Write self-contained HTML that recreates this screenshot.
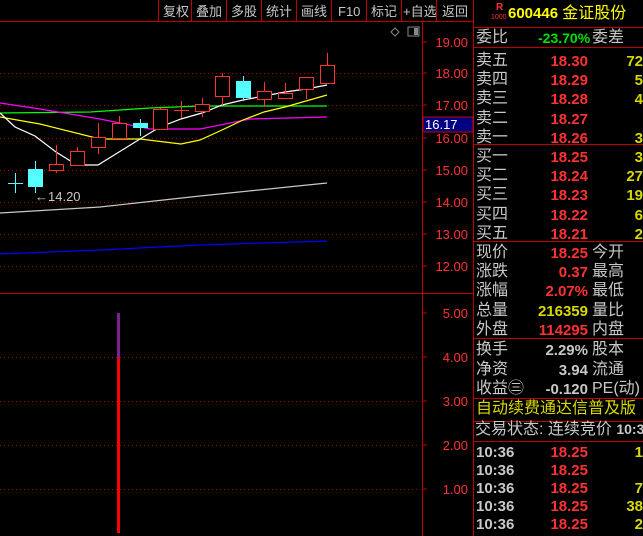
<!DOCTYPE html><html style="overflow:hidden;height:536px"><head><meta charset="utf-8"><style>
body{margin:0;width:643px;height:536px;background:#000;overflow:hidden;position:relative;font-family:"Liberation Sans","Noto Sans CJK SC",sans-serif}
.t{position:absolute;white-space:nowrap;line-height:1}
.l{color:#c8c8c8;font-size:16px}
.p{color:#ff3232;font-size:15px;font-weight:bold;text-align:right;width:70px}
.y{color:#d8d800;font-size:15px;font-weight:bold}
.w{color:#c8c8c8;font-size:15px;font-weight:bold}
.hl{position:absolute;left:474px;width:169px;height:1px;background:#c00000}
</style></head><body>
<svg width="643" height="536" style="position:absolute;left:0;top:0" font-family="Liberation Sans,Noto Sans CJK SC,sans-serif">
<g stroke="#c00000" stroke-width="1">
<line x1="0" y1="21.5" x2="473" y2="21.5"/>
<line x1="0" y1="293.5" x2="473" y2="293.5"/>
<line x1="422.5" y1="21" x2="422.5" y2="536"/>
<line x1="473.5" y1="0" x2="473.5" y2="536"/>
<line x1="158.5" y1="0" x2="158.5" y2="21"/><line x1="191.5" y1="0" x2="191.5" y2="21"/><line x1="226.5" y1="0" x2="226.5" y2="21"/><line x1="261.5" y1="0" x2="261.5" y2="21"/><line x1="296.5" y1="0" x2="296.5" y2="21"/><line x1="331.5" y1="0" x2="331.5" y2="21"/><line x1="366.5" y1="0" x2="366.5" y2="21"/><line x1="401.5" y1="0" x2="401.5" y2="21"/><line x1="436.5" y1="0" x2="436.5" y2="21"/>
</g>
<g stroke="#a00000" stroke-dasharray="1,3">
<line x1="0" y1="73.5" x2="420" y2="73.5"/><line x1="0" y1="105.5" x2="420" y2="105.5"/><line x1="0" y1="138.5" x2="420" y2="138.5"/><line x1="0" y1="170.5" x2="420" y2="170.5"/><line x1="0" y1="202.5" x2="420" y2="202.5"/><line x1="0" y1="234.5" x2="420" y2="234.5"/><line x1="0" y1="266.5" x2="420" y2="266.5"/>
<line x1="0" y1="357.5" x2="420" y2="357.5"/><line x1="0" y1="401.5" x2="420" y2="401.5"/><line x1="0" y1="445.5" x2="420" y2="445.5"/><line x1="0" y1="489.5" x2="420" y2="489.5"/>
</g>
<g stroke="#c00000"><line x1="422" y1="42" x2="427" y2="42"/><line x1="422" y1="73" x2="427" y2="73"/><line x1="422" y1="105" x2="427" y2="105"/><line x1="422" y1="138" x2="427" y2="138"/><line x1="422" y1="170" x2="427" y2="170"/><line x1="422" y1="202" x2="427" y2="202"/><line x1="422" y1="234" x2="427" y2="234"/><line x1="422" y1="266" x2="427" y2="266"/>
<line x1="422" y1="313" x2="427" y2="313"/><line x1="422" y1="357" x2="427" y2="357"/><line x1="422" y1="401" x2="427" y2="401"/><line x1="422" y1="445" x2="427" y2="445"/><line x1="422" y1="489" x2="427" y2="489"/></g>
<g fill="#ff3232" font-size="13" text-anchor="end">
<text x="468" y="47">19.00</text><text x="468" y="78">18.00</text><text x="468" y="110">17.00</text><text x="468" y="143">16.00</text><text x="468" y="175">15.00</text><text x="468" y="207">14.00</text><text x="468" y="239">13.00</text><text x="468" y="271">12.00</text>
<text x="468" y="318">5.00</text><text x="468" y="362">4.00</text><text x="468" y="406">3.00</text><text x="468" y="450">2.00</text><text x="468" y="494">1.00</text>
</g>
<rect x="423" y="117" width="50" height="15" fill="#000080" stroke="#c00000"/>
<text x="425" y="129" fill="#fff" font-size="13">16.17</text>
<g fill="#c8c8c8" font-size="13"><text x="163" y="16">复权</text><text x="196" y="16">叠加</text><text x="231" y="16">多股</text><text x="266" y="16">统计</text><text x="301" y="16">画线</text><text x="338" y="16">F10</text><text x="371" y="16">标记</text><text x="403" y="16">+自选</text><text x="442" y="16">返回</text></g>
<path d="M395 28l4 4-4 4-4-4z" fill="none" stroke="#888"/><rect x="408" y="27" width="11" height="9" fill="none" stroke="#888"/><rect x="414" y="28" width="4" height="7" fill="#888"/>
<g fill="none" stroke-width="1.2">
<polyline stroke="#c8c8c8" points="0,213 100,207 200,196 327,183"/>
<polyline stroke="#0000ff" points="0,254 100,250 200,245 327,241"/>
<polyline stroke="#00ff00" points="0,113 90,112 150,108 200,106 250,106 327,106"/>
<polyline stroke="#ff00ff" points="0,103 40,109 100,119 150,129 200,129 250,119 327,117"/>
<polyline stroke="#ffff00" points="0,117 40,124 100,139 140,139 181,144 200,140 222,130 243,120 264,112 285,107 306,101 327,95"/>
<polyline stroke="#ffffff" points="0,113 15,127 35,136 56,152 77,165 98,165 119,152 140,139 160,127 181,119 202,113 222,105 243,100 264,96 285,92 306,89 327,85"/>
</g>
<g stroke="#ff3232" fill="#000">
<line x1="56.5" y1="145" x2="56.5" y2="173"/><rect x="49.5" y="164.5" width="14" height="6"/>
<line x1="77.5" y1="147" x2="77.5" y2="165"/><rect x="70.5" y="151.5" width="14" height="14"/>
<line x1="98.5" y1="123" x2="98.5" y2="154"/><rect x="91.5" y="137.5" width="14" height="10"/>
<line x1="119.5" y1="116" x2="119.5" y2="139"/><rect x="112.5" y="123.5" width="14" height="15"/>
<line x1="160.5" y1="108" x2="160.5" y2="130"/><rect x="153.5" y="109.5" width="14" height="20"/>
<line x1="181.5" y1="101" x2="181.5" y2="118"/><line x1="174" y1="110.5" x2="189" y2="110.5"/>
<line x1="202.5" y1="98" x2="202.5" y2="117"/><rect x="195.5" y="104.5" width="14" height="7"/>
<line x1="222.5" y1="73" x2="222.5" y2="105"/><rect x="215.5" y="76.5" width="14" height="20"/>
<line x1="264.5" y1="82" x2="264.5" y2="107"/><rect x="257.5" y="91.5" width="14" height="8"/>
<line x1="285.5" y1="83" x2="285.5" y2="98"/><rect x="278.5" y="93.5" width="14" height="5"/>
<line x1="306.5" y1="77" x2="306.5" y2="99"/><rect x="299.5" y="77.5" width="14" height="12"/>
<line x1="327.5" y1="53" x2="327.5" y2="83"/><rect x="320.5" y="65.5" width="14" height="18"/>
</g>
<g stroke="#54ffff" fill="#54ffff">
<line x1="15.5" y1="173" x2="15.5" y2="193"/><line x1="8" y1="183.5" x2="23" y2="183.5"/>
<line x1="35.5" y1="161" x2="35.5" y2="193"/><rect x="28.5" y="169.5" width="14" height="17"/>
<line x1="140.5" y1="119" x2="140.5" y2="136"/><rect x="133.5" y="123.5" width="14" height="4"/>
<line x1="243.5" y1="76" x2="243.5" y2="101"/><rect x="236.5" y="81.5" width="14" height="16"/>
</g>
<text x="35" y="201" fill="#c8c8c8" font-size="13">←14.20</text>
<rect x="117" y="313" width="3" height="45" fill="#7f2090"/><rect x="117" y="358" width="3" height="175" fill="#ff0000"/>
</svg>
<div class="hl" style="top:27px"></div><div class="hl" style="top:47px"></div><div class="hl" style="top:144px"></div><div class="hl" style="top:241px"></div><div class="hl" style="top:338px"></div><div class="hl" style="top:398px"></div><div class="hl" style="top:421px"></div><div class="hl" style="top:441px"></div>
<div class="t" style="left:496px;top:3px;color:#ff3232;font-size:10px;font-weight:bold">R</div>
<div class="t" style="left:491px;top:14px;color:#ff3232;font-size:7px">1000</div>
<div class="t" style="left:508px;top:6px;color:#ffff00;font-size:15px;font-weight:bold">600446 <span style="font-weight:normal;font-size:16px">金证股份</span></div>
<div class="t l" style="left:476px;top:30px">委比</div>
<div class="t" style="left:538px;top:31px;color:#00e000;font-size:14px;font-weight:bold">-23.70%</div>
<div class="t l" style="left:592px;top:30px">委差</div>
<div class="t l" style="left:476px;top:51px;line-height:19.2px">卖五<br>卖四<br>卖三<br>卖二<br>卖一</div>
<div class="t p" style="left:518px;top:52px;line-height:19.2px">18.30<br>18.29<br>18.28<br>18.27<br>18.26</div>
<div class="t y" style="left:620px;top:52px;line-height:19.2px;width:23px;text-align:right;overflow:hidden">72<br>5<br>4<br><br>3</div>
<div class="t l" style="left:476px;top:147px;line-height:19.2px">买一<br>买二<br>买三<br>买四<br>买五</div>
<div class="t p" style="left:518px;top:148px;line-height:19.2px">18.25<br>18.24<br>18.23<br>18.22<br>18.21</div>
<div class="t y" style="left:620px;top:148px;line-height:19.2px;width:23px;text-align:right;overflow:hidden">3<br>27<br>19<br>6<br>2</div>
<div class="t l" style="left:476px;top:243px;line-height:19.2px">现价<br>涨跌<br>涨幅<br>总量<br>外盘</div>
<div class="t p" style="left:518px;top:244px;line-height:19.2px">18.25<br>0.37<br>2.07%<br><span style="color:#d8d800">216359</span><br>114295</div>
<div class="t l" style="left:592px;top:243px;line-height:19.2px">今开<br>最高<br>最低<br>量比<br>内盘</div>
<div class="t l" style="left:476px;top:340px;line-height:19.5px">换手<br>净资<br>收益㊂</div>
<div class="t w" style="left:518px;top:341px;line-height:19.5px;width:70px;text-align:right">2.29%<br>3.94<br>-0.120</div>
<div class="t l" style="left:592px;top:340px;line-height:19.5px">股本<br>流通<br>PE(动)</div>
<div class="t" style="left:476px;top:401px;color:#d8d800;font-size:16px">自动续费通达信普及版</div>
<div class="t l" style="left:475px;top:422px">交易状态: 连续竞价 <b style="font-size:14px">10:3</b></div>
<div class="t w" style="left:476px;top:444px;line-height:18px;height:92px;overflow:hidden">10:36<br>10:36<br>10:36<br>10:36<br>10:36<br>10:36</div>
<div class="t p" style="left:518px;top:444px;line-height:18px;height:92px;overflow:hidden">18.25<br>18.25<br>18.25<br>18.25<br>18.25<br>18.25</div>
<div class="t y" style="left:620px;top:444px;line-height:18px;width:23px;text-align:right;overflow:hidden">1<br><br>7<br>38<br>2</div>
</body></html>
